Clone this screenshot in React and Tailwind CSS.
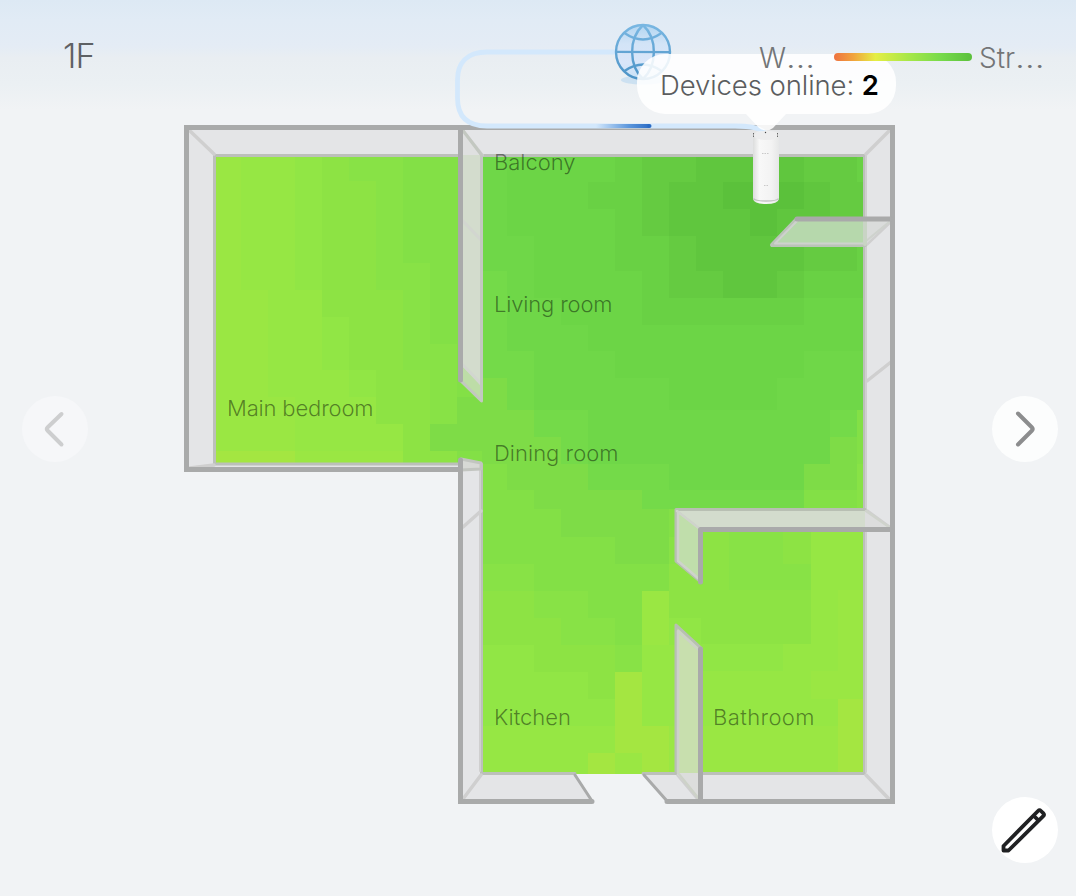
import React from "react";

const PALETTE = {
  a: "#5bc13b",
  b: "#60c63e",
  c: "#65cb41",
  d: "#69d144",
  e: "#6cd546",
  f: "#6fd748",
  g: "#74da49",
  h: "#7edc47",
  i: "#83e046",
  j: "#88e246",
  k: "#8de344",
  l: "#91e645",
  m: "#96e744",
  n: "#9ae743",
  o: "#a4e641",
};

const ZONES = [
  {
    xs: [214, 240.5, 268, 295, 322, 349, 376, 403, 430, 457, 484],
    ys: [155, 181, 208, 235.5, 262.5, 289.5, 316.5, 343.5, 370, 397, 424, 451, 465],
    rows: [
      "nmmlkjjiii",
      "nmmlkkjiii",
      "nmmlkkjiii",
      "nmmlkkjiii",
      "nmmlkkjjii",
      "nnmmkkkjii",
      "nnmmlkkjii",
      "nnmmlkkjji",
      "nnmmmlkkji",
      "nnnmmmkkjh",
      "nnnmmmmkhh",
      "ooonnnnkki",
    ],
  },
  {
    xs: [482, 507, 533.5, 561, 588, 615, 642, 669, 696, 723, 749.5, 776.5, 803.5, 830, 857, 866],
    ys: [155, 182, 208.5, 235.5, 270.5, 297.5, 324.5, 351, 378, 409.5, 436.5, 463.5, 490, 510],
    rows: [
      "feeeedccbbbbccd",
      "feeeddcbbaaabcc",
      "feeeedcbbbabbcc",
      "ffeeeddcbbbbccd",
      "gfeeeedccbbcddd",
      "gffeeeddddddeee",
      "gfffeeeeeeeeeee",
      "ggfffeeeeeeefff",
      "hgfffffeeeeffff",
      "hhggfffffffffgi",
      "hhhgfffffffffhi",
      "ihhhgggfffffhhj",
      "iihhhhggggggiij",
    ],
  },
  {
    xs: [482, 507, 533.5, 561, 588, 615, 642, 669, 702],
    ys: [509, 536.5, 564, 590.5, 617.5, 644.5, 671.5, 698.5, 725.5, 752.5, 774],
    rows: [
      "iiihhhhi",
      "iiiiihhj",
      "jjiiiiik",
      "kkjjiink",
      "kkkjjinl",
      "llkkkjmm",
      "llllkomm",
      "lllllomm",
      "mmmmmoon",
      "mmmmonon",
    ],
  },
  {
    xs: [701, 729, 756, 783, 810.5, 837.5, 865],
    ys: [528, 563.5, 590, 617, 644, 671, 698.5, 725.5, 753.5, 774],
    rows: ["kjjkmm", "kjjjmm", "kkkkmn", "kkkkmn", "lllmmn", "mmmmnn", "mmmmmo", "nnnnno", "nnnnno"],
  },
];

function HeatMap() {
  return (
    <g shapeRendering="crispEdges">
      {ZONES.map((zone, z) =>
        zone.rows.map((row, r) =>
          row.split("").map((level, c) => (
            <rect
              key={`${z}-${r}-${c}`}
              x={zone.xs[c]}
              y={zone.ys[r]}
              width={zone.xs[c + 1] - zone.xs[c]}
              height={zone.ys[r + 1] - zone.ys[r]}
              fill={PALETTE[level]}
            />
          ))
        )
      )}
    </g>
  );
}

function Walls() {
  return (
    <g strokeLinejoin="round" strokeLinecap="round">
      {/* wall faces */}
      <g fill="#e4e5e7">
        <path d="M187 128H892L865 155H214Z" />
        <path d="M187 128L214.500 155V464L187 469Z" />
        <path d="M892 128V801L865 773V155Z" />
        <path d="M187 469L214 464H481V469Z" />
        <path d="M461 461L482 464V773L461 801Z" />
        <path d="M461 801L482 773H575L593 801Z" />
        <path d="M643 773H865L892 801H666Z" />
      </g>
      {/* inner edges */}
      <g fill="none" stroke="#bcc0ba" strokeWidth="3">
        <path d="M460 155.500H214.500V464H460" />
        <path d="M482 155.500H864.500V773.500H643" />
        <path d="M481.500 464V773.500H575" />
      </g>
      <g fill="none" stroke="#cfcfcf" strokeWidth="3.500">
        <path d="M189 130L214 154M463 131L482 155M890 130L866 154M190 468L214 465M463 527L481 511M463 799L481 775M889 799L866 775M867 381L891 362M867 244L890 222M867 511L889 527M678 775L699 800" />
        <path d="M866 156V772M480 467V771" strokeWidth="2" />
      </g>
      {/* translucent partitions */}
      <path d="M461 128L482 155V402L461 381Z" fill="#d3dccd" />
      <path d="M461 128L482 155H461Z" fill="#dfe0e0" />
      <path d="M461 365L482 385V402L461 381Z" fill="#bddda7" />
      <path d="M463 221L481 240M463 365L481 384" stroke="#d2d6d0" strokeWidth="3" fill="none" />
      <path d="M461 128L481.500 155V401L461 381" stroke="#c3c8c1" strokeWidth="3" fill="none" />
      <path d="M461 459L481 463V469L461 470Z" fill="#d7d9d5" stroke="#c2c5c0" strokeWidth="3" />
      <path d="M796 219H865V245H772Z" fill="#b6d8ac" />
      <path d="M865 219H892L865 245Z" fill="#dadcdb" />
      <path d="M797 219L772 245H865" fill="none" stroke="#bac4b7" strokeWidth="4" />
      <path d="M797 221L775 243.500H863L889 222" fill="none" stroke="#ced2cd" strokeWidth="2" />
      <path d="M865 220V244" stroke="#c9d4c5" strokeWidth="4" />
      <path d="M676 509.500L701 529V582L676 561Z" fill="#c0deab" />
      <path d="M676 509.500H865L890 529H701Z" fill="#d3dccd" />
      <path d="M865 509.500L890 529H865Z" fill="#dcdddd" />
      <path d="M701 582L676 561V509.500H865" fill="none" stroke="#b8bfb3" strokeWidth="3" />
      <path d="M677 511L700 529M678 512V561L699 579M866 511L889 527" fill="none" stroke="#cfd3cc" strokeWidth="2.500" />
      <path d="M676 625L701 648V773H676Z" fill="#c8dfae" />
      <path d="M676 773H701V801Z" fill="#dcdddc" />
      <path d="M701 648L676 625V773" fill="none" stroke="#b8bfb3" strokeWidth="3" />
      <path d="M699 650L678 631V773L699 799" fill="none" stroke="#cdd2c8" strokeWidth="2.500" />
      {/* top edges */}
      <g fill="none" stroke="#a9aaaa" strokeWidth="5">
        <path d="M460 469.500H186.500V127.500H892.500V801.500H667" strokeLinejoin="miter" />
        <path d="M460.500 128V380" />
        <path d="M460.500 460V801.500H592" strokeLinejoin="miter" />
        <path d="M797 219H890" />
        <path d="M700.500 582V529.500H890" />
        <path d="M700.500 649V801" />
        <path d="M575 775L592 801M644 775L667 801" strokeWidth="3" />
      </g>
    </g>
  );
}

function Globe() {
  return (
    <g>
      <ellipse cx="643" cy="80" rx="22" ry="4.500" fill="#bfdaf0" opacity="0.7" />
      <circle cx="643" cy="52" r="27" fill="url(#globeFill)" />
      <g fill="none" stroke="url(#globeLine)" strokeWidth="2.400">
        <circle cx="643" cy="52" r="27" />
        <path d="M643 25C628 39 629 66 643 79M643 25C658 39 657 66 643 79" />
        <path d="M616 51.900L670 52.100" />
        <path d="M624.500 33Q643 46 661.500 33M624.500 71Q643 58 661.500 71" />
      </g>
    </g>
  );
}

function Router() {
  return (
    <g>
      <path d="M753 134Q753 131.500 759 131.500H773Q779 131.500 779 134V199Q778 204 766 204Q754 204 753 199Z" fill="url(#routerBody)" />
      <ellipse cx="766" cy="135.500" rx="12" ry="4.500" fill="#ededee" />
      <path d="M753.500 198.500Q755 201 766 201Q777 201 778.500 198.500" fill="none" stroke="#c2c3c3" strokeWidth="1.300" />
      <path d="M753.500 133V138M777.500 133V138" stroke="#666" strokeWidth="1" strokeDasharray="1.500 1" />
      <path d="M762 153.500H769.500M764 185.500H768" stroke="#c9c9c9" strokeWidth="1" strokeDasharray="1.500 1" />
      <circle cx="765.500" cy="132.500" r="0.700" fill="#444" />
    </g>
  );
}

const ROOMS = [
  { name: "Balcony", x: 494, y: 170, w: 81.5 },
  { name: "Living room", x: 494, y: 312, w: 118.5 },
  { name: "Dining room", x: 494, y: 461, w: 124.5 },
  { name: "Main bedroom", x: 227, y: 416, w: 146.5 },
  { name: "Kitchen", x: 494, y: 725, w: 77 },
  { name: "Bathroom", x: 713, y: 725, w: 101.5 },
];

function FloorPlan() {
  return (
    <svg viewBox="0 0 1076 896" className="col-start-1 row-start-1 h-[896px] w-[1076px]">
      <defs>
        <linearGradient id="globeFill" x1="0" y1="0" x2="0" y2="1">
          <stop offset="0" stopColor="#b3d6f1" />
          <stop offset="0.350" stopColor="#d3e4f7" />
          <stop offset="0.700" stopColor="#d9e6f9" />
          <stop offset="1" stopColor="#c9e2f6" />
        </linearGradient>
        <linearGradient id="globeLine" gradientUnits="userSpaceOnUse" x1="0" y1="25" x2="0" y2="79">
          <stop offset="0" stopColor="#79b7e2" />
          <stop offset="1" stopColor="#4c93c6" />
        </linearGradient>
        <linearGradient id="pulse" gradientUnits="userSpaceOnUse" x1="596" y1="0" x2="651" y2="0">
          <stop offset="0" stopColor="#d3e8fc" />
          <stop offset="0.600" stopColor="#5b96dc" />
          <stop offset="1" stopColor="#2a6bc4" />
        </linearGradient>
        <linearGradient id="routerBody" x1="0" y1="0" x2="1" y2="0">
          <stop offset="0" stopColor="#dcdddd" />
          <stop offset="0.250" stopColor="#f8f8f8" />
          <stop offset="0.700" stopColor="#f3f3f3" />
          <stop offset="1" stopColor="#e6e7e7" />
        </linearGradient>
      </defs>
      <HeatMap />
      <Walls />
      <g className="fill-black/45 font-['Inter',sans-serif] text-[22px] font-[350]">
        {ROOMS.map((room) => (
          <text key={room.name} x={room.x} y={room.y} textLength={room.w}>
            {room.name}
          </text>
        ))}
      </g>
      <path
        d="M616 52H487C466 52 457.500 64 457.500 80V98C457.500 116 467 126 487 126H735C752 126 762 128 766 134"
        fill="none"
        stroke="#d3e8fc"
        strokeWidth="4.800"
      />
      <path d="M596 126H649.500" stroke="url(#pulse)" strokeWidth="4" />
      <circle cx="649.500" cy="126" r="2" fill="#2a6bc4" />
      <Globe />
      <path
        d="M665 54H868A28 28 0 0 1 896 82V86A28 28 0 0 1 868 114H786L773 128Q766 133 759 128L746 114H665A28 28 0 0 1 637 86V82A28 28 0 0 1 665 54Z"
        fill="#fff"
        fillOpacity="0.880"
      />
      <Router />
    </svg>
  );
}

function Chevron({ points, className }) {
  return (
    <svg viewBox="0 0 66 66" className={className} fill="none" stroke="currentColor" strokeWidth="4" strokeLinecap="round" strokeLinejoin="round">
      <path d={points} />
    </svg>
  );
}

export default function App() {
  return (
    <div className="grid h-[896px] w-[1076px] overflow-hidden bg-[#f1f3f5] bg-[linear-gradient(180deg,#dde9f4_0px,#e1ebf5_20px,#e4ecf5_46px,#e9eef2_58px,#ebf0f3_84px,#f1f3f5_110px)] font-['Inter',sans-serif]">
      <FloorPlan />
      <div className="z-10 col-start-1 row-start-1 flex flex-col">
        <header className="flex h-[115px] items-start justify-between pr-8 pl-[63px]">
          <h1 className="mt-[33px] text-[34px] leading-[46px] font-[350] tracking-[-0.8px] text-[#5e6164]">1F</h1>
          <div className="mt-[43px] flex items-center text-[28px] leading-[30px] font-[350] text-[#737577]">
            <span className="w-[75px]">
              W<span className="inline-block origin-left scale-x-[1.22]">…</span>
            </span>
            <span className="mb-[2px] h-2 w-[138px] rounded-full bg-[linear-gradient(90deg,#ee7240_0%,#f1a33c_14%,#e5ee44_30%,#a5e748_55%,#76da4a_78%,#5bc03c_100%)]" />
            <span className="w-[72px] pl-[7px]">
              Str<span className="inline-block origin-left scale-x-[1.25]">…</span>
            </span>
          </div>
        </header>
        <div className="flex h-[628px] items-center justify-between pr-[18px] pl-[22px]">
          <button aria-label="Previous floor" className="size-[66px] rounded-full bg-[#f6f7f9] text-[#cdcecf]">
            <Chevron className="size-[66px]" points="M39.500 18L25.500 31.500Q24 33 25.500 34.500L39.500 48.500" />
          </button>
          <button aria-label="Next floor" className="size-[66px] rounded-full bg-[#fcfdfd] text-[#8c8d8e]">
            <Chevron className="size-[66px]" points="M26 17.500L40 31.500Q41.500 33 40 34.500L26 48.500" />
          </button>
        </div>
        <div className="flex justify-end pt-[54px] pr-[18px]">
          <button aria-label="Edit floor plan" className="size-[66px] rounded-full bg-white">
            <svg viewBox="0 0 66 66" className="size-[66px]" fill="none" stroke="#202123" strokeWidth="3.800" strokeLinejoin="round">
              <path d="M11.500 53.500V49L46 14Q47.500 12.500 49 14L51.200 16.200Q52.700 17.700 51.200 19.200L16.500 53.500ZM41.500 18.500L46.700 23.700" />
            </svg>
          </button>
        </div>
      </div>
      <p className="absolute top-[70px] left-[660px] text-[27.5px] leading-[30px] font-[350] tracking-[-0.08px] whitespace-nowrap text-[#5b5d5f]">
        Devices online: <b className="font-semibold text-black">2</b>
      </p>
    </div>
  );
}
